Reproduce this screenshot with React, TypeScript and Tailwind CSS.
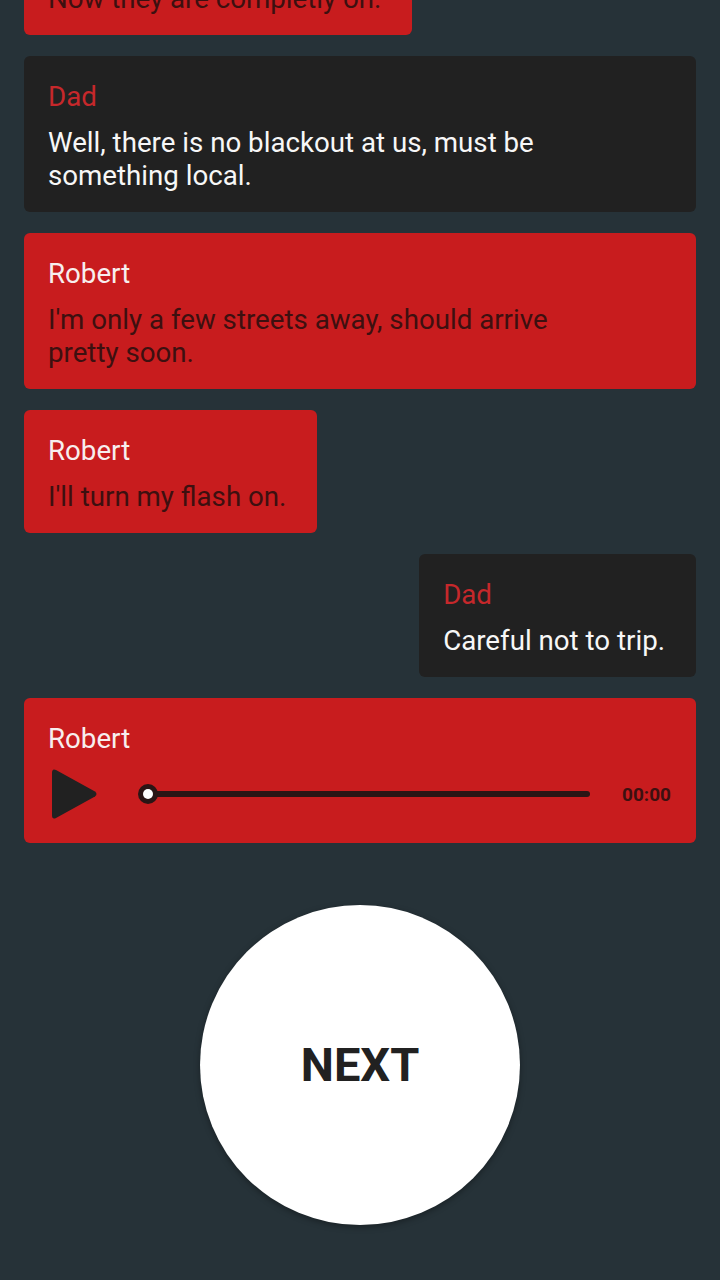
import React from "react";

const RED = "bg-[#c81c1e]";

function Bubble({
  who,
  text,
  full,
  right,
}: {
  who: "Robert" | "Dad";
  text: string;
  full?: boolean;
  right?: boolean;
}) {
  const isRobert = who === "Robert";
  return (
    <div
      className={`${isRobert ? RED : "bg-[#212121]"} rounded-[6px] pl-[24px] pr-[31px] pt-[24px] pb-[20px] ${
        full ? "w-full" : "w-fit"
      } ${right ? "self-end" : "self-start"}`}
    >
      <div
        className={`text-[27.7px] leading-[33px] ${
          isRobert ? "text-[#f7eeee]" : "text-[#c6282b]"
        }`}
      >
        {who}
      </div>
      <div
        className={`mt-[13px] text-[27.7px] leading-[33px] max-w-[550px] ${
          isRobert ? "text-[#3d1010]" : "text-[#f7f7f7]"
        }`}
      >
        {text}
      </div>
    </div>
  );
}

function AudioBubble() {
  return (
    <div className={`${RED} rounded-[6px] w-full pl-[24px] pr-[25px] pt-[24px] pb-[23px]`}>
      <div className="text-[27.7px] leading-[33px] text-[#f7eeee]">Robert</div>
      <div className="mt-[13px] flex items-center h-[52px]">
        <svg width="46" height="52" viewBox="0 0 46 52" className="ml-[4px] shrink-0">
          <path
            d="M4 2 Q0 0 0 5 L0 47 Q0 52 4 50 L43 28.5 Q46 26 43 23.5 Z"
            fill="#212121"
          />
        </svg>
        <div className="ml-[40px] flex-1 relative h-[20px]">
          <div className="absolute left-[10px] right-[10px] top-[7px] h-[6px] rounded-full bg-[#2a1515]" />
          <div className="absolute left-0 top-0 w-[20px] h-[20px] rounded-full bg-[#2a1515] flex items-center justify-center">
            <div className="w-[10px] h-[10px] rounded-full bg-white" />
          </div>
        </div>
        <div className="ml-[22px] text-[19px] font-bold text-[#3d1010] leading-none">00:00</div>
      </div>
    </div>
  );
}

export default function App() {
  return (
    <div
      className="w-[720px] h-[1280px] overflow-hidden bg-[#263238]"
      style={{ fontFamily: "Roboto, 'Noto Sans', sans-serif" }}
    >
      <div className="mt-[-88px] px-[24px] flex flex-col gap-[21px]">
        <Bubble who="Robert" text="Now they are completly on." />
        <Bubble
          who="Dad"
          text="Well, there is no blackout at us, must be something local."
          full
        />
        <Bubble
          who="Robert"
          text="I'm only a few streets away, should arrive pretty soon."
          full
        />
        <Bubble who="Robert" text="I'll turn my flash on." />
        <Bubble who="Dad" text="Careful not to trip." right />
        <AudioBubble />
      </div>
      <div className="mt-[62px] flex justify-center">
        <button className="w-[320px] h-[320px] rounded-full bg-white shadow-[0_2px_6px_rgba(0,0,0,0.35)] flex items-center justify-center">
          <span className="text-[47px] font-bold text-[#212121]">NEXT</span>
        </button>
      </div>
    </div>
  );
}
